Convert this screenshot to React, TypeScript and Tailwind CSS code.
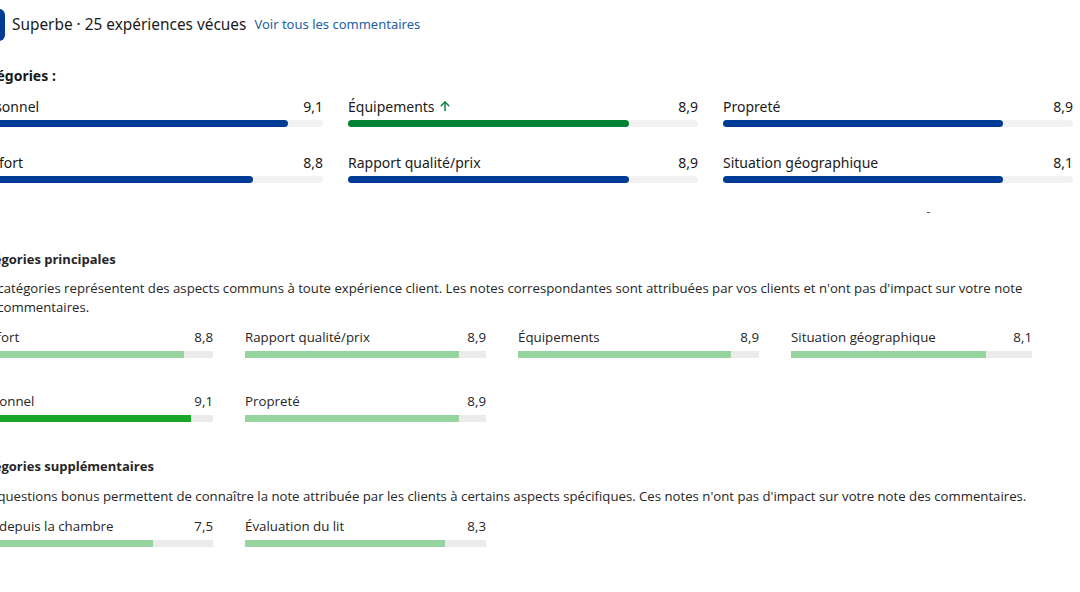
import React from "react";

type Score = { label: string; value: string; fill: number; color?: string; arrow?: boolean };

const topScores: Score[] = [
  { label: "Personnel", value: "9,1", fill: 315 },
  { label: "Équipements", value: "8,9", fill: 281, color: "bg-[#008234]", arrow: true },
  { label: "Propreté", value: "8,9", fill: 280 },
  { label: "Confort", value: "8,8", fill: 280 },
  { label: "Rapport qualité/prix", value: "8,9", fill: 281 },
  { label: "Situation géographique", value: "8,1", fill: 280 },
];

const mainScores: Score[] = [
  { label: "Confort", value: "8,8", fill: 212 },
  { label: "Rapport qualité/prix", value: "8,9", fill: 214 },
  { label: "Équipements", value: "8,9", fill: 213 },
  { label: "Situation géographique", value: "8,1", fill: 195 },
  { label: "Personnel", value: "9,1", fill: 219, color: "bg-[#17a626]" },
  { label: "Propreté", value: "8,9", fill: 214 },
];

const extraScores: Score[] = [
  { label: "Vue depuis la chambre", value: "7,5", fill: 181 },
  { label: "Évaluation du lit", value: "8,3", fill: 200 },
];

function TopBar({ s }: { s: Score }) {
  return (
    <div className="w-[350px]">
      <div className="flex items-center justify-between h-[20px] text-[14px] text-[#1a1a1a]">
        <span className="flex items-center gap-[3px]">
          {s.label}
          {s.arrow && (
            <svg width="14" height="14" viewBox="0 0 24 24" fill="none" stroke="#008234" strokeWidth="2.4" strokeLinecap="round" strokeLinejoin="round">
              <path d="M12 20V5" />
              <path d="M5.5 11.5 12 5l6.5 6.5" />
            </svg>
          )}
        </span>
        <span>{s.value}</span>
      </div>
      <div className="mt-[4px] h-[7px] rounded-full bg-[#f2f2f2]">
        <div className={`h-full rounded-full ${s.color ?? "bg-[#003b95]"}`} style={{ width: s.fill }} />
      </div>
    </div>
  );
}

function SmallBar({ s }: { s: Score }) {
  return (
    <div className="w-[241px]">
      <div className="flex items-center justify-between h-[18px] text-[13.3px] text-[#262626]">
        <span>{s.label}</span>
        <span>{s.value}</span>
      </div>
      <div className="mt-[4px] h-[7px] bg-[#ebebeb]">
        <div className={`h-full ${s.color ?? "bg-[#97d5a0]"}`} style={{ width: s.fill }} />
      </div>
    </div>
  );
}

export default function App() {
  return (
    <div className="w-[1080px] h-[592px] overflow-hidden bg-white">
      {/* booking.com style summary */}
      <div className="ml-[-27px] font-['Noto_Sans',sans-serif]">
        <div className="flex items-center gap-[7px] pt-[9px] h-[41px]">
          <div className="w-[32px] h-[32px] rounded-[6px] bg-[#003b95] shrink-0" />
          <span className="text-[15.4px] text-[#1a1a1a]">Superbe · 25 expériences vécues</span>
          <a className="ml-[1px] text-[13px] text-[#1f5fa6]">Voir tous les commentaires</a>
        </div>
        <div className="mt-[25px] text-[14px] font-bold text-[#1a1a1a] leading-[20px]">Catégories :</div>
        <div className="mt-[10px] grid grid-cols-[350px_350px_350px] gap-x-[25px] gap-y-[25px]">
          {topScores.map((s) => (
            <TopBar key={s.label} s={s} />
          ))}
        </div>
        <div className="relative h-[30px]">
          <div className="absolute left-[954px] top-[29px] w-[3px] h-[1px] bg-[#555]" />
        </div>
      </div>

      {/* extranet style */}
      <div className="ml-[-28px] w-[1070px] font-['Open_Sans',sans-serif] text-[#262626]">
        <div className="mt-[37px] text-[13px] font-bold leading-[18px]">Catégories principales</div>
        <p className="mt-[11px] text-[13.2px] leading-[19px]">
          Ces catégories représentent des aspects communs à toute expérience client. Les notes correspondantes sont attribuées par vos clients et n'ont pas d'impact sur votre note
          <br />
          des commentaires.
        </p>
        <div className="mt-[12px] grid grid-cols-[241px_241px_241px_241px] gap-x-[32px] gap-y-[35px]">
          {mainScores.map((s) => (
            <SmallBar key={s.label} s={s} />
          ))}
        </div>
        <div className="mt-[35px] text-[13px] font-bold leading-[18px]">Catégories supplémentaires</div>
        <p className="mt-[12px] text-[13.2px] leading-[19px]">
          Ces questions bonus permettent de connaître la note attribuée par les clients à certains aspects spécifiques. Ces notes n'ont pas d'impact sur votre note des commentaires.
        </p>
        <div className="mt-[12px] grid grid-cols-[241px_241px] gap-x-[32px]">
          {extraScores.map((s) => (
            <SmallBar key={s.label} s={s} />
          ))}
        </div>
      </div>
    </div>
  );
}
